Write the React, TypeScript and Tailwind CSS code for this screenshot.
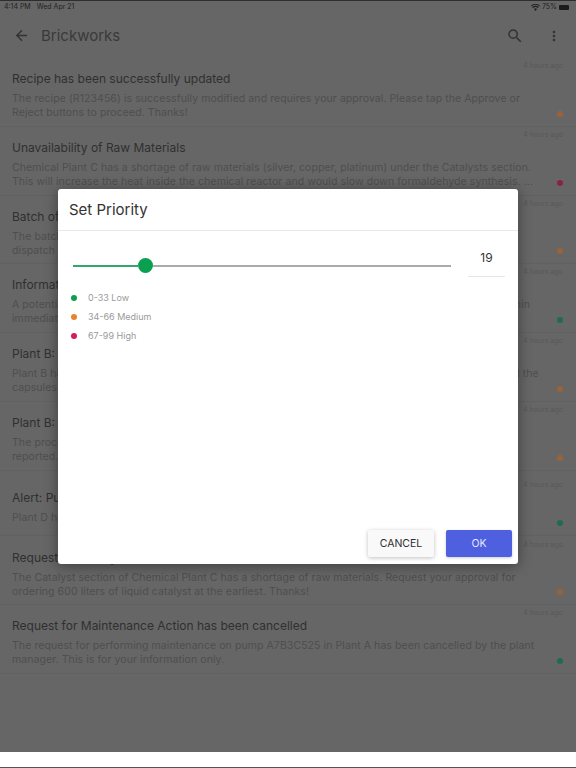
type Notice = {
  title: string;
  body: string[];
  dot: string;
  height: string;
  top: string;
};

const ORANGE = "bg-[#9a6238]";
const RED = "bg-[#8a2246]";
const GREEN = "bg-[#1c6e4a]";

const NOTICES: Notice[] = [
  {
    title: "Recipe has been successfully updated",
    body: [
      "The recipe (R123456) is successfully modified and requires your approval. Please tap the Approve or",
      "Reject buttons to proceed. Thanks!",
    ],
    dot: ORANGE,
    height: "h-[69px]",
    top: "pt-[0px]",
  },
  {
    title: "Unavailability of Raw Materials",
    body: [
      "Chemical Plant C has a shortage of raw materials (silver, copper, platinum) under the Catalysts section.",
      "This will increase the heat inside the chemical reactor and would slow down formaldehyde synthesis. ...",
    ],
    dot: RED,
    height: "h-[69px]",
    top: "pt-[0px]",
  },
  {
    title: "Batch of capsules",
    body: ["The batch of capsules", "dispatch"],
    dot: ORANGE,
    height: "h-[68px]",
    top: "pt-[0px]",
  },
  {
    title: "Information on the potential risk",
    body: [
      "A potential hazard has been identified at the reactor of Plant A. Please report this to the sitewide admin",
      "immediately.",
    ],
    dot: GREEN,
    height: "h-[69px]",
    top: "pt-[0px]",
  },
  {
    title: "Plant B: Capsule line",
    body: [
      "Plant B has reported a problem with the filling of the gelatin capsules. Please check and reconfirm all the",
      "capsules",
    ],
    dot: ORANGE,
    height: "h-[69px]",
    top: "pt-[0px]",
  },
  {
    title: "Plant B: Process update",
    body: ["The process has been", "reported."],
    dot: ORANGE,
    height: "h-[69px]",
    top: "pt-[0px]",
  },
  {
    title: "Alert: Pump failure",
    body: ["Plant D has reported"],
    dot: GREEN,
    height: "h-[65px]",
    top: "pt-[6px]",
  },
  {
    title: "Request for Catalyst",
    body: [
      "The Catalyst section of Chemical Plant C has a shortage of raw materials. Request your approval for",
      "ordering 600 liters of liquid catalyst at the earliest. Thanks!",
    ],
    dot: ORANGE,
    height: "h-[69px]",
    top: "pt-[1px]",
  },
  {
    title: "Request for Maintenance Action has been cancelled",
    body: [
      "The request for performing maintenance on pump A7B3C525 in Plant A has been cancelled by the plant",
      "manager. This is for your information only.",
    ],
    dot: GREEN,
    height: "h-[69px]",
    top: "pt-[0px]",
  },
];

function NoticeRow({ notice }: { notice: Notice }) {
  return (
    <div className={`relative border-b border-[#616161] px-3 ${notice.height} ${notice.top}`}>
      <p className="pt-[3px] pr-[1px] text-right text-[7px] leading-[10px] text-[#585858]">4 hours ago</p>
      <p className="text-[12px] leading-[16px] text-[#303030]">{notice.title}</p>
      <div className="mt-[5px] text-[10.5px] leading-[14px] tracking-[0.08px] text-[#4e4e4e]">
        {notice.body.map((line) => (
          <p key={line} className="whitespace-nowrap">
            {line}
          </p>
        ))}
      </div>
      <span className={`absolute right-[13px] bottom-[9px] h-[6px] w-[6px] rounded-full ${notice.dot}`} />
    </div>
  );
}

function LegendItem({ color, label }: { color: string; label: string }) {
  return (
    <div className="flex h-[19px] items-center gap-[11px]">
      <span className={`h-[6px] w-[6px] rounded-full ${color}`} />
      <span className="text-[9px] text-[#9a9a9a]">{label}</span>
    </div>
  );
}

export default function App() {
  return (
    <div className="relative h-[768px] w-[576px] overflow-hidden bg-white font-['Inter',sans-serif]">
      <div className="flex h-[752px] flex-col border-t border-[#2e2e2e] bg-[#666666]">
        {/* Status bar */}
        <div className="flex h-[12px] items-center justify-between px-1 text-[7px] text-[#222222]">
          <div className="flex gap-[6px]">
            <span>4:14 PM</span>
            <span>Wed Apr 21</span>
          </div>
          <div className="flex items-center gap-[2px] pr-[3px]">
            <svg width="9" height="7" viewBox="0 0 24 18" fill="#222222">
              <path d="M12 18l-4-5a6 6 0 0 1 8 0zM5.500 10.500L3 8a13 13 0 0 1 18 0l-2.500 2.500a10 10 0 0 0-13 0zM1.500 6L0 4a18 18 0 0 1 24 0l-1.500 2a15 15 0 0 0-21 0z" />
            </svg>
            <span>75%</span>
            <span className="h-[5px] w-[10px] rounded-[1px] bg-[#1c1c1c]" />
          </div>
        </div>

        {/* Top bar */}
        <div className="flex h-[45px] items-center pr-[14px] pl-[13px] text-[#333333]">
          <svg width="17" height="17" viewBox="0 0 24 24" fill="currentColor">
            <path d="M20 11H7.830l5.590-5.590L12 4l-8 8 8 8 1.410-1.410L7.830 13H20v-2z" />
          </svg>
          <span className="ml-[11px] pt-[1px] text-[15px] text-[#3a3a3a]">Brickworks</span>
          <svg width="18" height="18" viewBox="0 0 24 24" fill="currentColor" className="mr-[22px] ml-auto">
            <path d="M15.500 14h-.790l-.280-.270A6.470 6.470 0 0 0 16 9.500 6.500 6.500 0 1 0 9.500 16c1.610 0 3.090-.590 4.230-1.570l.270.280v.790l5 4.990L20.490 19l-4.990-5zm-6 0C7.010 14 5 11.990 5 9.500S7.010 5 9.500 5 14 7.010 14 9.500 11.990 14 9.500 14z" />
          </svg>
          <svg width="16" height="16" viewBox="0 0 24 24" fill="currentColor">
            <path d="M12 8c1.100 0 2-.900 2-2s-.900-2-2-2-2 .900-2 2 .900 2 2 2zm0 2c-1.100 0-2 .900-2 2s.900 2 2 2 2-.900 2-2-.900-2-2-2zm0 6c-1.100 0-2 .900-2 2s.900 2 2 2 2-.900 2-2-.900-2-2-2z" />
          </svg>
        </div>

        {NOTICES.map((notice) => (
          <NoticeRow key={notice.title} notice={notice} />
        ))}
      </div>
      <div className="absolute inset-x-0 bottom-0 h-[1px] bg-[#555555]" />

      {/* Dialog */}
      <div className="absolute top-[189px] left-[58px] flex h-[375px] w-[460px] flex-col rounded-[3px] bg-white shadow-[0_2px_14px_rgba(0,0,0,0.4)]">
        <div className="flex h-[42px] items-center border-b border-[#e8e8e8] pt-[1px] pl-[11px] text-[15px] text-[#333333]">
          Set Priority
        </div>

        <div className="flex h-[46px] items-start">
          <div className="mt-[27px] ml-[15px] flex h-[15px] w-[378px] items-center">
            <div className="h-[2px] w-[65px] bg-[#35a56b]" />
            <div className="h-[15px] w-[15px] shrink-0 rounded-full bg-[#0b9f50]" />
            <div className="h-[2px] flex-1 bg-[#aaaaaa]" />
          </div>
          <div className="mt-[19px] ml-[17px] flex h-[27px] w-[37px] items-start justify-center border-b border-[#e6e6e6] text-[12px] leading-[15px] text-[#333333]">
            19
          </div>
        </div>

        <div className="mt-[11px] flex flex-col pl-[13px]">
          <LegendItem color="bg-[#0b9f50]" label="0-33 Low" />
          <LegendItem color="bg-[#e8832f]" label="34-66 Medium" />
          <LegendItem color="bg-[#d81b52]" label="67-99 High" />
        </div>

        <div className="mt-auto flex justify-end gap-[12px] pr-[6px] pb-[7px]">
          <button className="h-[27px] w-[66px] rounded-[2px] bg-[#f9f9f9] text-[10.5px] text-[#2e2e2e] shadow-[0_1px_4px_rgba(0,0,0,0.25)]">
            CANCEL
          </button>
          <button className="h-[27px] w-[66px] rounded-[2px] bg-[#4e5fe0] text-[10.5px] text-[#e6e8fb] shadow-[0_1px_3px_rgba(0,0,0,0.2)]">
            OK
          </button>
        </div>
      </div>
    </div>
  );
}
